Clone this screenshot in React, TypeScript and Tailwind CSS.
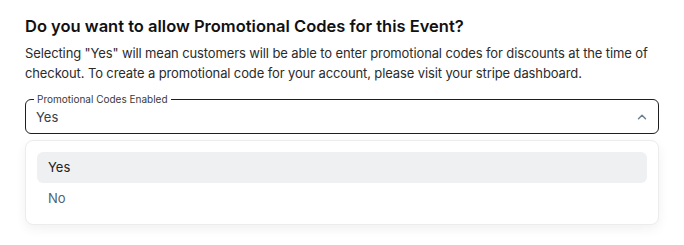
import { ChevronUp } from "lucide-react";

const options = ["Yes", "No"];

export default function App() {
  const selected = "Yes";

  return (
    <main className="min-h-screen bg-white px-[25px] pt-[14px] font-['Inter',sans-serif]">
      <h2 className="text-[16.5px] leading-[24px] font-semibold text-[#111111]">
        Do you want to allow Promotional Codes for this Event?
      </h2>
      <p className="mt-[5px] text-[13px] leading-[20px] tracking-[-0.12px] text-[#2b2b2b]">
        Selecting "Yes" will mean customers will be able to enter promotional codes for discounts at the time of
        <br />
        checkout. To create a promotional code for your account, please visit your stripe dashboard.
      </p>

      <div className="mt-[10px] w-[634px]">
        <fieldset className="rounded-[6px] border border-[#1f1f1f] p-0">
          <legend className="ml-[8px] px-[3px] text-[10px] leading-[13px] text-[#3a3a3a]">
            Promotional Codes Enabled
          </legend>
          <div className="flex items-center justify-between pl-[10px] pr-[9px] pt-[1px] pb-[6px] text-[13px] leading-[20px] text-[#34404c]">
            <span>{selected}</span>
            <ChevronUp className="h-[14px] w-[14px] text-[#6b7f8f]" strokeWidth={2.5} />
          </div>
        </fieldset>

        <ul className="mt-[6px] rounded-[8px] border border-[#ececec] bg-white px-[11px] pt-[11px] pb-[10px] shadow-[0_4px_12px_rgba(0,0,0,0.06)]">
          {options.map((opt) => (
            <li
              key={opt}
              className={
                opt === selected
                  ? "flex h-[31px] items-center rounded-[6px] bg-[#eff0f1] px-[11px] text-[13px] text-[#222222]"
                  : "flex h-[31px] items-center rounded-[6px] px-[11px] text-[13px] text-[#4d6374]"
              }
            >
              {opt}
            </li>
          ))}
        </ul>
      </div>
    </main>
  );
}
